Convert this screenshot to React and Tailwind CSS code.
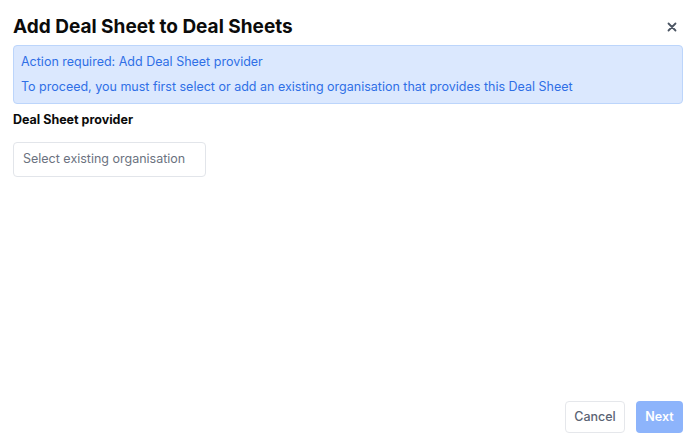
import React from "react";

export default function App() {
  return (
    <div className="flex h-[448px] w-[688px] flex-col bg-white pl-[13px] pr-[5px] font-['Inter',sans-serif]">
      <div className="flex h-[45px] items-center justify-between pt-[8px]">
        <h1 className="text-[19px] font-bold leading-none text-[#0b0b0b]">Add Deal Sheet to Deal Sheets</h1>
        <button className="mr-[5px] flex h-[12px] w-[12px] items-center justify-center text-[#4b5563]">
          <svg width="10" height="10" viewBox="0 0 10 10" fill="none" stroke="currentColor" strokeWidth="1.8" strokeLinecap="round">
            <path d="M1.5 1.5 L8.5 8.5 M8.5 1.5 L1.5 8.5" />
          </svg>
        </button>
      </div>
      <div className="flex h-[59px] flex-col justify-center gap-[7px] rounded-[4px] border border-[#bcd5fb] bg-[#dbe8fe] px-[7px] text-[12.5px] leading-[18px] text-[#2f6fe6]">
        <p>Action required: Add Deal Sheet provider</p>
        <p>To proceed, you must first select or add an existing organisation that provides this Deal Sheet</p>
      </div>
      <div className="mt-[7px] text-[12.5px] font-bold leading-[18px] text-[#0b0b0b]">Deal Sheet provider</div>
      <div className="mt-[13px] flex h-[35px] w-[193px] items-center rounded-[4px] border border-[#e2e5ea] px-[9px] text-[12.5px] text-[#6b7280]">
        Select existing organisation
      </div>
      <div className="mt-auto mb-[15px] flex justify-end gap-[11px]">
        <button className="h-[32px] w-[60px] rounded-[4px] border border-[#e5e7eb] bg-white text-[12.5px] font-medium text-[#5b6474]">Cancel</button>
        <button className="h-[32px] w-[47px] rounded-[4px] bg-[#8db4fb] text-[12.5px] font-semibold text-white">Next</button>
      </div>
    </div>
  );
}
